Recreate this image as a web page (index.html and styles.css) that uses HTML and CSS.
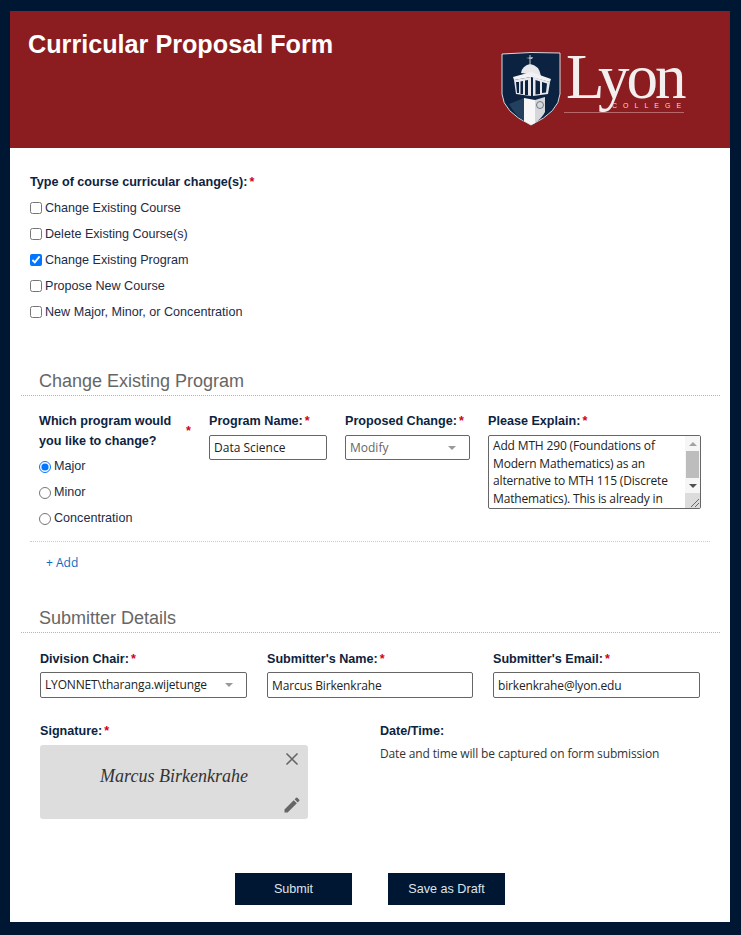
FILE: index.html
```html
<!DOCTYPE html>
<html lang="en">
<head>
    <meta charset="UTF-8">
    <title>Curricular Proposal Form</title>
    <link rel="stylesheet" href="styles.css">
</head>
<body>
<div class="form_card">
    <header class="form_header">
        <h1>Curricular Proposal Form</h1>
        <div class="logo">
            <svg class="logo_shield" width="60" height="74" viewBox="0 0 60 74">
                <path d="M1 2 Q30 -0.5 59 1 L59 42 Q58 60 30 73 Q2 60 1 42 Z" fill="#0b2240" stroke="#d9d9de" stroke-width="1"/>
                <path d="M29 3 V12" stroke="#c9cbd1" stroke-width="1" fill="none"/>
                <path d="M25 6 L32 5 L31 7 Z" fill="#c9cbd1"/>
                <path d="M20 21 Q21 14 29 12 Q38 13 40 24 Z" fill="#e8e8ec"/>
                <path d="M12 25 L30 20 L50 27 L49 30 L30 25 L13 28 Z" fill="#f2f2f4"/>
                <path d="M13 28 L30 25 V44 L15 42 Z" fill="#e8e8ec"/>
                <path d="M15 30 L18 30 V41 L16 41 Z M19.500 29.500 L22 29 V42 L19.500 42 Z M24 28.500 L27 28 V43 L24 43 Z" fill="#0b2240"/>
                <path d="M32 25 L49 30 L47 42 L32 44 Z" fill="#e8e8ec"/>
                <path d="M34.500 28 L39 29.500 V42 L34.500 42.500 Z M41 30 L46 31.500 L45 40.500 L41 41 Z" fill="#0b2240"/>
                <path d="M8 52 L23 46 V69 Q14 63 8 52 Z" fill="#23405f"/>
                <path d="M23 46 L34 48 V71 L30 73 L23 69 Z" fill="#f7f7f8"/>
                <path d="M34 48 L44 45 V60 Q41 66 34 71 Z" fill="#d5d7db"/>
                <circle cx="39" cy="53" r="3.500" fill="none" stroke="#55606f" stroke-width="0.800"/>
            </svg>
            <div class="wordmark">
                <div class="wordmark_name">Lyon</div>
                <div class="wordmark_sub">COLLEGE</div>
                <div class="wordmark_rule"></div>
            </div>
        </div>
    </header>

    <section class="change_types">
        <div class="field_label">Type of course curricular change(s):<span class="req">*</span></div>
        <label class="choice"><input type="checkbox">Change Existing Course</label>
        <label class="choice"><input type="checkbox">Delete Existing Course(s)</label>
        <label class="choice"><input type="checkbox" checked>Change Existing Program</label>
        <label class="choice"><input type="checkbox">Propose New Course</label>
        <label class="choice"><input type="checkbox">New Major, Minor, or Concentration</label>
    </section>

    <h2 class="section_title first_title">Change Existing Program</h2>
    <section class="program_row">
        <div>
            <div class="field_label program_label">
                <span>Which program would you like to change?</span>
                <span class="req">*</span>
            </div>
            <label class="choice"><input type="radio" name="program" checked>Major</label>
            <label class="choice"><input type="radio" name="program">Minor</label>
            <label class="choice"><input type="radio" name="program">Concentration</label>
        </div>
        <div>
            <div class="field_label">Program Name:<span class="req">*</span></div>
            <input class="text_input short_input" type="text" value="Data Science">
        </div>
        <div>
            <div class="field_label">Proposed Change:<span class="req">*</span></div>
            <div class="select_box short_input muted">Modify</div>
        </div>
        <div>
            <div class="field_label">Please Explain:<span class="req">*</span></div>
            <div class="explain_wrap">
                <textarea class="explain_box">Add MTH 290 (Foundations of Modern Mathematics) as an alternative to MTH 115 (Discrete Mathematics). This is already in place for students in the program and should be shown in the catalog so that advisors and students can see both of the options when planning a course of study.</textarea>
                <div class="fake_scroll">
                    <div class="scroll_btn"><span class="arrow_up"></span></div>
                    <div class="scroll_thumb"></div>
                    <div class="scroll_btn"><span class="arrow_down"></span></div>
                    <svg class="scroll_corner" width="15" height="15" viewBox="0 0 15 15">
                        <path d="M14 6 L6 14 M14 10 L10 14" stroke="#666" stroke-width="1" fill="none"/>
                    </svg>
                </div>
            </div>
        </div>
    </section>
    <div class="add_row"><a class="add_link" href="#">+ Add</a></div>

    <h2 class="section_title second_title">Submitter Details</h2>
    <section class="submitter_row">
        <div>
            <div class="field_label">Division Chair:<span class="req">*</span></div>
            <div class="select_box">LYONNET\tharanga.wijetunge</div>
        </div>
        <div>
            <div class="field_label">Submitter's Name:<span class="req">*</span></div>
            <input class="text_input" type="text" value="Marcus Birkenkrahe">
        </div>
        <div>
            <div class="field_label">Submitter's Email:<span class="req">*</span></div>
            <input class="text_input" type="text" value="birkenkrahe@lyon.edu">
        </div>
    </section>

    <section class="sign_row">
        <div>
            <div class="field_label">Signature:<span class="req">*</span></div>
            <div class="sign_box">
                <svg class="sign_clear" width="14" height="14" viewBox="0 0 14 14">
                    <path d="M1.500 1.500 L12.500 12.500 M12.500 1.500 L1.500 12.500" stroke="#666" stroke-width="1.600" fill="none"/>
                </svg>
                <span class="sign_text">Marcus Birkenkrahe</span>
                <svg class="sign_edit" width="20" height="20" viewBox="0 0 24 24">
                    <path d="M3 17.250V21h3.750L17.810 9.940l-3.750-3.750L3 17.250zM20.710 7.040a1 1 0 0 0 0-1.410l-2.340-2.340a1 1 0 0 0-1.410 0l-1.830 1.830 3.750 3.750 1.830-1.830z" fill="#666"/>
                </svg>
            </div>
        </div>
        <div>
            <div class="field_label">Date/Time:</div>
            <p class="date_note">Date and time will be captured on form submission</p>
        </div>
    </section>

    <div class="button_row">
        <button class="form_button" type="button">Submit</button>
        <button class="form_button" type="button">Save as Draft</button>
    </div>
</div>
</body>
</html>
```

FILE: styles.css
```css
body {
  margin: 0;
  padding: 11px 11px 13px 10px;
  background: #001733;
  font-family: "Liberation Sans", sans-serif;
  font-size: 12.600px;
  color: #13233f;
}

.form_card {
  background: #fff;
  height: 911px;
  overflow: hidden;
}

.form_header {
  display: flex;
  justify-content: space-between;
  height: 137px;
  background: #8b1c1f;
  color: #fff;
}

.form_header h1 {
  margin: 18px 0 0 18px;
  font-size: 25.200px;
  line-height: 30px;
}

.logo {
  display: flex;
  gap: 3px;
  margin: 41px 46px 0 0;
  height: 74px;
}

.logo_shield {
  display: block;
}

.wordmark {
  width: 120px;
}

.wordmark_name {
  padding-left: 2px;
  font-family: "Liberation Serif", serif;
  font-size: 63px;
  line-height: 50px;
  letter-spacing: -3px;
  color: #f4efef;
}

.wordmark_sub {
  padding-left: 48px;
  font-size: 7px;
  line-height: 8px;
  letter-spacing: 6px;
  white-space: nowrap;
  color: #e9dcdc;
}

.wordmark_rule {
  margin-top: 2px;
  height: 1px;
  background: #b8686a;
}

.field_label {
  font-weight: bold;
  line-height: 20px;
  color: #0d2340;
}

.req {
  margin-left: 2px;
  color: #d0021b;
}

.choice {
  display: flex;
  align-items: center;
  height: 26px;
  color: #1c2c47;
}

.choice input {
  margin: 1px 3px 0 0;
  width: 12px;
  height: 12px;
  flex: none;
}

.change_types {
  padding: 24px 0 0 20px;
}

.change_types .field_label {
  margin-bottom: 3px;
}

.change_types .choice input {
  margin-top: 0;
}

.section_title {
  margin: 0 10px 0 11px;
  padding: 0 0 3px 18px;
  border-bottom: 1px dotted #b5b5b5;
  font-size: 18px;
  font-weight: normal;
  line-height: 22px;
  color: #666;
}

.first_title {
  margin-top: 45px;
}

.second_title {
  margin-top: 35px;
}

.program_row {
  display: grid;
  grid-template-columns: 152px 118px 125px 213px;
  column-gap: 18px;
  margin: 15px 20px 0 20px;
  padding: 0 0 10px 9px;
  border-bottom: 1px dotted #ccc;
}

.program_label {
  display: flex;
  align-items: center;
  justify-content: space-between;
  margin-bottom: 2px;
}

.program_label span:first-child {
  width: 140px;
}

.text_input,
.select_box {
  display: block;
  box-sizing: border-box;
  width: 100%;
  height: 26px;
  margin: 4px 0 0;
  padding: 0 4px;
  border: 1px solid #666;
  border-radius: 2px;
  background: #fff;
  font-family: "Open Sans", sans-serif;
  font-size: 12px;
  letter-spacing: -0.160px;
  line-height: 24px;
  color: #222;
  outline: none;
}

.short_input {
  height: 25px;
  letter-spacing: 0;
  line-height: 23px;
}

.select_box {
  position: relative;
}

.select_box::after {
  content: "";
  position: absolute;
  top: 10px;
  right: 13px;
  border: 4px solid transparent;
  border-top: 4px solid #999;
}

.muted {
  color: #666;
}

.explain_wrap {
  position: relative;
  width: 213px;
  height: 74px;
  margin-top: 4px;
}

.explain_box {
  display: block;
  box-sizing: border-box;
  width: 100%;
  height: 100%;
  padding: 1px 18px 1px 4px;
  border: 1px solid #666;
  border-radius: 2px;
  font-family: "Open Sans", sans-serif;
  font-size: 12px;
  letter-spacing: -0.160px;
  line-height: 17.500px;
  color: #222;
  outline: none;
  overflow: hidden;
  resize: none;
}

.fake_scroll {
  position: absolute;
  top: 1px;
  right: 1px;
  bottom: 1px;
  width: 15px;
  display: flex;
  flex-direction: column;
  background: #f6f6f6;
}

.scroll_btn {
  display: flex;
  align-items: center;
  justify-content: center;
  height: 15px;
}

.arrow_up {
  border: 4px solid transparent;
  border-top: none;
  border-bottom: 4px solid #a3a3a3;
}

.arrow_down {
  border: 4px solid transparent;
  border-bottom: none;
  border-top: 4px solid #505050;
}

.scroll_thumb {
  height: 27px;
  margin: 0 1px;
  background: #bdbdbd;
}

.scroll_corner {
  display: block;
  background: #dcdcdc;
}

.add_row {
  padding: 12px 0 0 36px;
  line-height: 17px;
}

.add_link {
  font-family: "Open Sans", sans-serif;
  font-size: 12px;
  color: #0a6cc4;
  text-decoration: none;
}

.submitter_row {
  display: grid;
  grid-template-columns: 207px 206px 207px;
  column-gap: 20px;
  margin: 16px 0 0 30px;
}

.submitter_row .text_input,
.submitter_row .select_box {
  margin-top: 3px;
}

.sign_row {
  display: grid;
  grid-template-columns: 268px 1fr;
  column-gap: 72px;
  margin: 23px 0 0 30px;
}

.sign_box {
  position: relative;
  display: flex;
  align-items: center;
  justify-content: center;
  height: 74px;
  margin-top: 4px;
  border-radius: 3px;
  background: #ddd;
}

.sign_text {
  margin: 0 0 12px 0;
  font-family: "Liberation Serif", serif;
  font-size: 18px;
  font-style: italic;
  color: #333;
}

.sign_clear {
  position: absolute;
  top: 7px;
  right: 9px;
}

.sign_edit {
  position: absolute;
  right: 6px;
  bottom: 4px;
}

.date_note {
  margin: 4px 0 0;
  font-family: "Open Sans", sans-serif;
  font-size: 12px;
  letter-spacing: -0.140px;
  line-height: 18px;
  color: #333;
}

.button_row {
  display: flex;
  justify-content: center;
  gap: 36px;
  margin: 54px 0 0;
}

.form_button {
  width: 117px;
  height: 32px;
  padding: 0;
  border: none;
  background: #001733;
  font-family: "Liberation Sans", sans-serif;
  font-size: 12.600px;
  color: #dfe3ea;
}
```
